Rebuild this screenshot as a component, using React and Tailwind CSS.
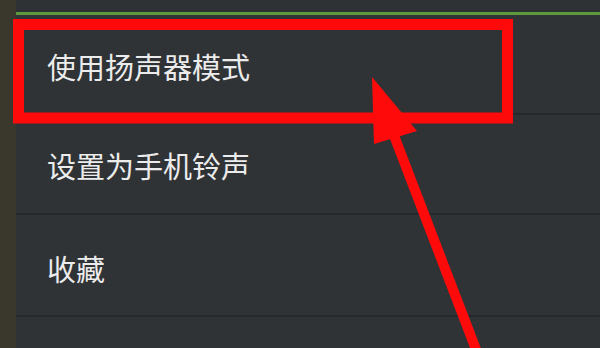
export default function App() {
  const font = { fontFamily: '"Noto Sans CJK SC", "Noto Sans", sans-serif' };
  return (
    <div className="relative w-[600px] h-[348px] overflow-hidden flex bg-[#39362b]" style={font}>
      <div className="w-[16px] h-full bg-[#3a372c]" />
      <div className="flex-1 h-full flex flex-col bg-[#2f3336]">
        <div className="h-[12px] bg-[#2e3235]" />
        <div className="h-[3px] bg-[#5c9a3e]" />
        <div className="h-[100px] flex items-center pl-[31px] border-b-2 border-[#26292b]">
          <span className="text-[29px] leading-none text-[#ececec] pt-[4px]">使用扬声器模式</span>
        </div>
        <div className="h-[100px] flex items-center pl-[31px] border-b-2 border-[#26292b]">
          <span className="text-[29px] leading-none text-[#ececec] pt-[2px]">设置为手机铃声</span>
        </div>
        <div className="h-[102px] flex items-center pl-[31px] border-b-2 border-[#26292b]">
          <span className="text-[29px] leading-none text-[#ececec] pt-[6px]">收藏</span>
        </div>
        <div className="flex-1" />
      </div>
      <svg className="absolute left-0 top-0" width="600" height="348" viewBox="0 0 600 348">
        <rect x="18.5" y="24.5" width="489" height="93.5" fill="none" stroke="#ff0a0a" strokeWidth="11" />
        <line x1="390" y1="125" x2="480" y2="360" stroke="#ff0a0a" strokeWidth="10" />
        <polygon points="372,77 374,144 417,131" fill="#ff0a0a" />
      </svg>
    </div>
  );
}
